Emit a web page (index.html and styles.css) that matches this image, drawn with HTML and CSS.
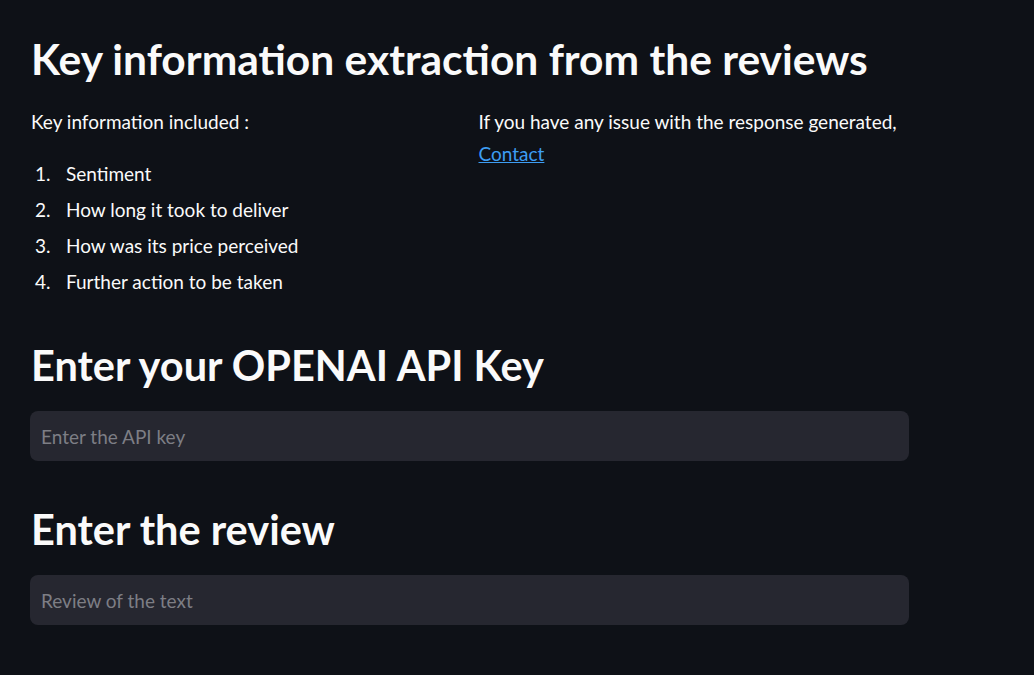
FILE: index.html
```html
<!DOCTYPE html>
<html lang="en">
<head>
<meta charset="utf-8">
<title>Key information extraction</title>
<link rel="stylesheet" href="styles.css">
</head>
<body>
<main class="main">
  <h1 class="title">Key information extraction from the reviews</h1>
  <div class="columns">
    <div class="col">
      <p class="text">Key information included :</p>
      <ol class="list">
        <li>Sentiment</li>
        <li>How long it took to deliver</li>
        <li>How was its price perceived</li>
        <li>Further action to be taken</li>
      </ol>
    </div>
    <div class="col">
      <p class="text">If you have any issue with the response generated, <a class="link" href="#">Contact</a></p>
    </div>
  </div>
  <h2 class="heading heading-api">Enter your OPENAI API Key</h2>
  <input class="field" type="text" placeholder="Enter the API key">
  <h2 class="heading heading-review">Enter the review</h2>
  <input class="field" type="text" placeholder="Review of the text">
</main>
</body>
</html>
```
FILE: styles.css
```css
html, body {
  margin: 0;
  padding: 0;
  background: #0e1117;
}
body {
  font-family: "Source Sans Pro", Lato, "Noto Sans", sans-serif;
  color: #fafafa;
  width: 1034px;
  height: 675px;
  overflow: hidden;
}
.main {
  width: 878px;
  padding: 29px 0 0 31px;
}
.title {
  margin: 0;
  font-size: 42.5px;
  line-height: 60px;
  font-weight: 700;
}
.columns {
  display: grid;
  grid-template-columns: 1fr 1fr;
  column-gap: 17px;
  margin-top: 17px;
}
.text {
  margin: 0;
  font-size: 19px;
  line-height: 32px;
}
.link {
  color: #3d9df3;
}
.list {
  list-style: none;
  margin: 18px 0 0 0;
  padding: 0;
  counter-reset: item;
  font-size: 19px;
}
.list li {
  counter-increment: item;
  line-height: 36px;
  display: flex;
}
.list li::before {
  content: counter(item) ".";
  width: 31px;
  padding-left: 4px;
  flex: none;
}
.heading {
  margin: 0;
  font-size: 41.5px;
  line-height: 60px;
  font-weight: 700;
}
.heading-api {
  margin-top: 35px;
}
.heading-review {
  margin-top: 38px;
}
.field {
  display: block;
  box-sizing: border-box;
  width: 879px;
  height: 50px;
  margin: 16px 0 0 -1px;
  padding: 0 11px;
  border: none;
  border-radius: 8px;
  background: #262730;
  color: #fafafa;
  font-family: inherit;
  font-size: 19px;
  outline: none;
}
.field::placeholder {
  color: #7d7e85;
}
```
